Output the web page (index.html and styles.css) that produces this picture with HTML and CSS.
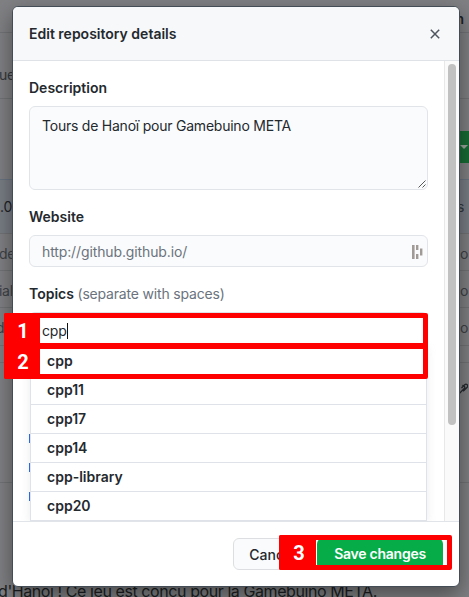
FILE: index.html
```html
<!DOCTYPE html>
<html lang="en">
<head>
<meta charset="utf-8">
<title>Edit repository details</title>
<link rel="stylesheet" href="styles.css">
</head>
<body>
<main class="page">
  <div class="bg-row top"><span class="unpin">n</span></div>
  <div class="bg-row nav"><span>ue</span></div>
  <div class="bg-row actions"><span class="code-button"><i class="caret"></i></span></div>
  <div class="bg-row commit"><span>.0</span><span class="commits">s</span></div>
  <div class="bg-row file"><span>de</span><span>o</span></div>
  <div class="bg-row file"><span>ial</span><span>o</span></div>
  <div class="bg-row file last"><span class="shifted">d</span><span>o</span></div>
  <div class="bg-row gap"></div>
  <div class="bg-row readme"><svg class="link" viewBox="0 0 16 16"><path d="M5 9 3 12a2 2 0 0 0 3 2l6-6a2.500 2.500 0 0 0-3-3M8 8l4-4a2 2 0 0 1 3 3l-5 5"/></svg></div>
  <p class="readme-text">d'Hanoï ! Ce jeu est conçu pour la Gamebuino META.</p>
</main>

<section class="modal" role="dialog">
  <header class="modal-header">
    <h1>Edit repository details</h1>
    <svg class="close" viewBox="0 0 10 10"><path d="M.8.8 9.2 9.2M9.2.8.8 9.2"/></svg>
  </header>
  <div class="modal-body">
    <div class="form">
      <div class="label">Description</div>
      <div class="field textarea">Tours de Hanoï pour Gamebuino META
        <svg class="grip" viewBox="0 0 8 8"><path d="M.5 7.5l7-7M4.5 7.5l3-3"/></svg>
      </div>
      <div class="label website">Website</div>
      <div class="field input"><span>http://github.github.io/</span>
        <svg class="keeper" viewBox="0 0 12 16"><path d="M1 1h2.6v14H1zM5 1h2.4v5H5zM5 10h2.4v5H5zM9 4.500h2.400v7H9z"/></svg>
      </div>
      <div class="label topics">Topics <span>(separate with spaces)</span></div>
      <div class="topic-input"><span>cpp</span></div>
      <ul class="suggestions">
        <li>cpp</li><li>cpp11</li><li>cpp17</li><li class="checked">cpp14</li><li class="checked">cpp-library</li><li class="checked">cpp20</li>
      </ul>
    </div>
    <div class="scrollbar"><div class="thumb"></div></div>
  </div>
  <footer class="modal-footer">
    <div class="cancel">Cancel</div>
    <div class="save">Save changes</div>
  </footer>
</section>

<div class="callout first"><b>1</b></div>
<div class="callout second"><b>2</b></div>
<div class="callout third"><b>3</b></div>
</body>
</html>
```
FILE: styles.css
```css
* { box-sizing: border-box; }
body {
  margin: 0;
  width: 469px;
  height: 597px;
  overflow: hidden;
  position: relative;
  background: #808184;
  color: #24292e;
  font: 14px/21px Inter, "Liberation Sans", sans-serif;
}
.page { height: 597px; overflow: hidden; }
.bg-row {
  display: flex;
  justify-content: space-between;
  align-items: center;
  border-bottom: 1px solid #717376;
  color: #35383c;
}
.top { height: 33px; justify-content: flex-end; padding: 5px 5px 0 0; }
.unpin { font-weight: 600; color: #1f2225; }
.nav { height: 66px; align-items: flex-end; padding-bottom: 13px; letter-spacing: -.3px; }
.nav span { margin-left: -1px; }
.actions { height: 81px; border-color: #697482; justify-content: flex-end; padding-bottom: 16px; align-items: flex-end; }
.code-button { width: 30px; height: 32px; background: #176c34; display: flex; align-items: center; justify-content: flex-end; padding-right: 1px; }
.caret { border: 4px solid transparent; border-top-color: #9aa69e; border-bottom: 0; }
.commit { height: 54px; background: #797e85; color: #1f2225; letter-spacing: -.3px; }
.commits { padding-right: 5px; color: #35383c; }
.file { height: 37px; color: #3e4247; padding: 2px 1px 0 0; letter-spacing: -.3px; }
.file span:first-child { margin-left: -1px; }
.file .shifted:first-child { margin-left: -4px; }
.file.last { height: 38px; }
.gap { height: 17px; }
.readme { height: 120px; justify-content: flex-end; align-items: flex-start; padding: 18px 1px 0 0; }
.link { width: 13px; height: 14px; fill: none; stroke: #25292d; stroke-width: 1.6; }
.readme-text { margin: 96px 0 0 -2px; font-size: 16px; line-height: 24px; white-space: nowrap; color: #1c1f22; letter-spacing: -.42px; }

.modal {
  position: absolute;
  left: 12px;
  top: 6px;
  width: 448px;
  height: 581px;
  display: flex;
  flex-direction: column;
  overflow: hidden;
  background: #fff;
  border: 1px solid #444d56;
  border-radius: 6px;
  box-shadow: 0 8px 22px rgba(0, 0, 0, .42);
}
.modal-header {
  height: 54px;
  flex: none;
  display: flex;
  align-items: center;
  justify-content: space-between;
  padding: 0 19px 0 16px;
  background: #f6f8fa;
  border-bottom: 1px solid #dfe3e7;
}
h1 { margin: 0; font-size: 14px; line-height: 21px; font-weight: 600; }
.close { width: 10px; height: 10px; fill: none; stroke: #4f5660; stroke-width: 1.5; }
.modal-body { height: 460px; flex: none; display: flex; overflow: hidden; }
.form { width: 431px; padding: 16px 16px 0; flex: none; }
.label { height: 21px; font-weight: 600; }
.label span { color: #6a737d; font-weight: 400; letter-spacing: -.18px; }
.field { width: 399px; background: #fafbfc; border: 1px solid #e1e4e8; border-radius: 6px; }
.textarea { position: relative; height: 84px; margin-top: 8px; padding: 8px 12px; letter-spacing: -.23px; }
.grip { position: absolute; right: 1px; bottom: 1px; width: 8px; height: 8px; stroke: #454545; stroke-width: .9; }
.website { margin-top: 16px; }
.input { height: 32px; margin-top: 8px; padding: 1px 4px 0 12px; display: flex; align-items: center; justify-content: space-between; color: #6a737d; letter-spacing: -.12px; }
.keeper { width: 12px; height: 16px; fill: #a19b97; }
.topics { margin-top: 16px; }
.topic-input { width: 399px; height: 33px; margin-top: 8px; padding: 7px 0 0 12px; border: 1px solid #dfe3e8; border-radius: 6px 6px 0 0; letter-spacing: -.2px; }
.topic-input span { display: inline-block; height: 16px; line-height: 16px; border-right: 1px solid #111; }
.suggestions { list-style: none; margin: 1px 0 0 1px; padding: 0; width: 397px; border: 1px solid #dfe2e8; border-width: 1px 1px 0; box-shadow: 0 2px 9px rgba(149, 157, 165, .2); }
.suggestions li { position: relative; height: 29px; padding-left: 16px; line-height: 28px; font-weight: 600; border-bottom: 1px solid #dfe2e8; }
.checked::before { content: ""; position: absolute; left: -2px; top: 0; width: 1px; height: 9px; background: #2868e8; }
.scrollbar { width: 15px; height: 460px; flex: none; padding: 3px 0 0 3px; background: #fafafa; border-left: 1px solid #e8e8e8; }
.thumb { width: 8px; height: 361px; border-radius: 4px; background: #c1c1c1; }
.modal-footer { flex: 1; border-top: 1px solid #e1e4e8; display: flex; justify-content: flex-end; gap: 8px; padding: 16px 16px 0; }
.cancel, .save { height: 32px; line-height: 31px; border-radius: 6px; text-align: center; }
.cancel { width: 76px; background: #fafbfc; border: 1px solid #dcdee1; font-weight: 500; padding-left: 3px; }
.save { width: 126px; background: #05ac48; color: #fff; font-weight: 600; letter-spacing: -.25px; }

.callout { position: absolute; border: 5px solid #f00; border-radius: 2px; }
.callout b { position: absolute; top: -5px; bottom: -5px; left: -5px; background: #f00; border-radius: 2px; color: #fff; font: bold 20px Roboto, Arial, sans-serif; display: flex; align-items: center; justify-content: center; }
.first { left: 4px; top: 313px; width: 424px; height: 35px; }
.second { left: 4px; top: 344px; width: 424px; height: 35px; }
.first b, .second b { width: 36px; padding-left: 2px; }
.third { left: 279px; top: 535px; width: 173px; height: 35px; }
.third b { width: 37px; padding-left: 3px; }
```
